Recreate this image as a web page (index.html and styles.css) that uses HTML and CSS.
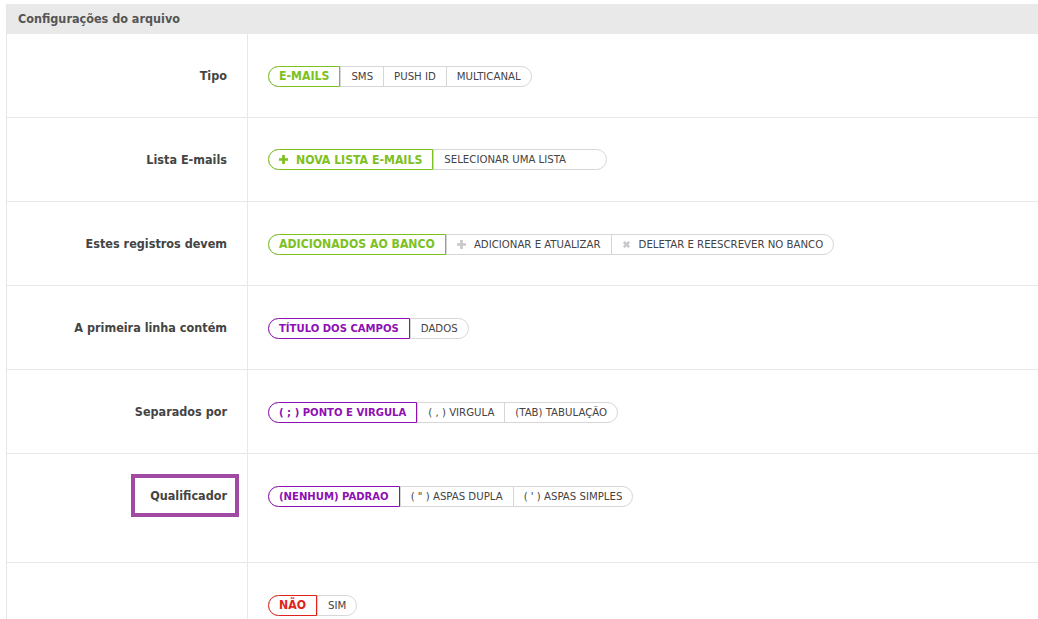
FILE: index.html
```html
<!DOCTYPE html>
<html lang="pt-BR">
<head>
    <meta charset="UTF-8">
    <title>Configurações do arquivo</title>
    <link rel="stylesheet" href="styles.css">
</head>
<body>
    <div class="panel">
        <div class="panel-title">Configurações do arquivo</div>

        <div class="row">
            <div class="label">Tipo</div>
            <div class="field">
                <div class="btn-group">
                    <span class="btn green active">E-MAILS</span>
                    <span class="btn">SMS</span>
                    <span class="btn">PUSH ID</span>
                    <span class="btn">MULTICANAL</span>
                </div>
            </div>
        </div>

        <div class="row">
            <div class="label">Lista E-mails</div>
            <div class="field">
                <div class="btn-group">
                    <span class="btn green active"><svg class="ico" viewBox="0 0 10 10"><path d="M3.5 0h3v3.5H10v3H6.5V10h-3V6.5H0v-3h3.5z" fill="#7cc11e"/></svg>NOVA LISTA E-MAILS</span>
                    <span class="btn wide">SELECIONAR UMA LISTA</span>
                </div>
            </div>
        </div>

        <div class="row">
            <div class="label">Estes registros devem</div>
            <div class="field">
                <div class="btn-group">
                    <span class="btn green active">ADICIONADOS AO BANCO</span>
                    <span class="btn"><svg class="ico" viewBox="0 0 10 10"><path d="M3.5 0h3v3.5H10v3H6.5V10h-3V6.5H0v-3h3.5z" fill="#c8c8c8"/></svg>ADICIONAR E ATUALIZAR</span>
                    <span class="btn"><svg class="ico" viewBox="0 0 10 10"><path d="M1 3l2-2 2 2 2-2 2 2-2 2 2 2-2 2-2-2-2 2-2-2 2-2z" fill="#c8c8c8"/></svg>DELETAR E REESCREVER NO BANCO</span>
                </div>
            </div>
        </div>

        <div class="row">
            <div class="label">A primeira linha contém</div>
            <div class="field">
                <div class="btn-group">
                    <span class="btn purple active">TÍTULO DOS CAMPOS</span>
                    <span class="btn">DADOS</span>
                </div>
            </div>
        </div>

        <div class="row">
            <div class="label">Separados por</div>
            <div class="field">
                <div class="btn-group">
                    <span class="btn purple active">( ; ) PONTO E VIRGULA</span>
                    <span class="btn">( , ) VIRGULA</span>
                    <span class="btn">(TAB) TABULAÇÃO</span>
                </div>
            </div>
        </div>

        <div class="row tall">
            <div class="label"><span class="marked">Qualificador</span></div>
            <div class="field">
                <div class="btn-group">
                    <span class="btn purple active">(NENHUM) PADRAO</span>
                    <span class="btn">( " ) ASPAS DUPLA</span>
                    <span class="btn">( ' ) ASPAS SIMPLES</span>
                </div>
            </div>
        </div>

        <div class="row">
            <div class="label"></div>
            <div class="field">
                <div class="btn-group">
                    <span class="btn red active">NÃO</span>
                    <span class="btn">SIM</span>
                </div>
            </div>
        </div>
    </div>
</body>
</html>
```

FILE: styles.css
```css
* {
    margin: 0;
    padding: 0;
    box-sizing: border-box;
}

body {
    background-color: #fff;
    color: #444;
    font-family: 'DejaVu Sans Condensed', 'DejaVu Sans', Tahoma, sans-serif;
    overflow: hidden;
}

/* Panel */
.panel {
    margin: 4px 0 0 6px;
    border-left: 1px solid #e6e6e6;
    width: 1040px;
}

.panel-title {
    height: 30px;
    line-height: 30px;
    padding-left: 11px;
    background-color: #e9e9e9;
    font-size: 12.5px;
    font-weight: 700;
    color: #555;
}

/* Rows */
.row {
    display: flex;
    height: 84px;
    border-bottom: 1px solid #e8e8e8;
}

.row.tall {
    height: 109px;
}

.label {
    width: 241px;
    flex-shrink: 0;
    border-right: 1px solid #e8e8e8;
    padding: 34px 20px 0 0;
    text-align: right;
    font-size: 12.5px;
    font-weight: 700;
    color: #444;
}

.marked {
    display: inline-block;
    outline: 4px solid #a04aa3;
    padding: 10px 8px 10px 15px;
    margin: -10px -8px 0 0;
}

.field {
    flex: 1;
    padding: 31px 0 0 20px;
}

/* Button groups */
.btn-group {
    display: inline-flex;
    height: 21px;
    border: 1px solid #d6d6d6;
    border-radius: 11px;
}

.btn {
    display: flex;
    align-items: center;
    height: 21px;
    margin: -1px 0;
    padding: 0 10px;
    border-left: 1px solid #d6d6d6;
    font-size: 11.3px;
    color: #444;
    white-space: nowrap;
}

.btn:first-child {
    border-left: none;
    margin-left: -1px;
    border-radius: 11px 0 0 11px;
}

.btn.wide {
    padding-right: 40px;
}

.btn.active {
    border: 1px solid;
    font-size: 12.2px;
    font-weight: 700;
}

.btn.green {
    color: #7cc11e;
    border-color: #7cc11e;
}

.btn.purple {
    font-size: 11.2px;
    color: #8e10b3;
    border-color: #8e10b3;
}

.btn.red {
    color: #e0231a;
    border-color: #e0231a;
}

.ico {
    width: 9px;
    height: 9px;
    margin-right: 8px;
}
```
